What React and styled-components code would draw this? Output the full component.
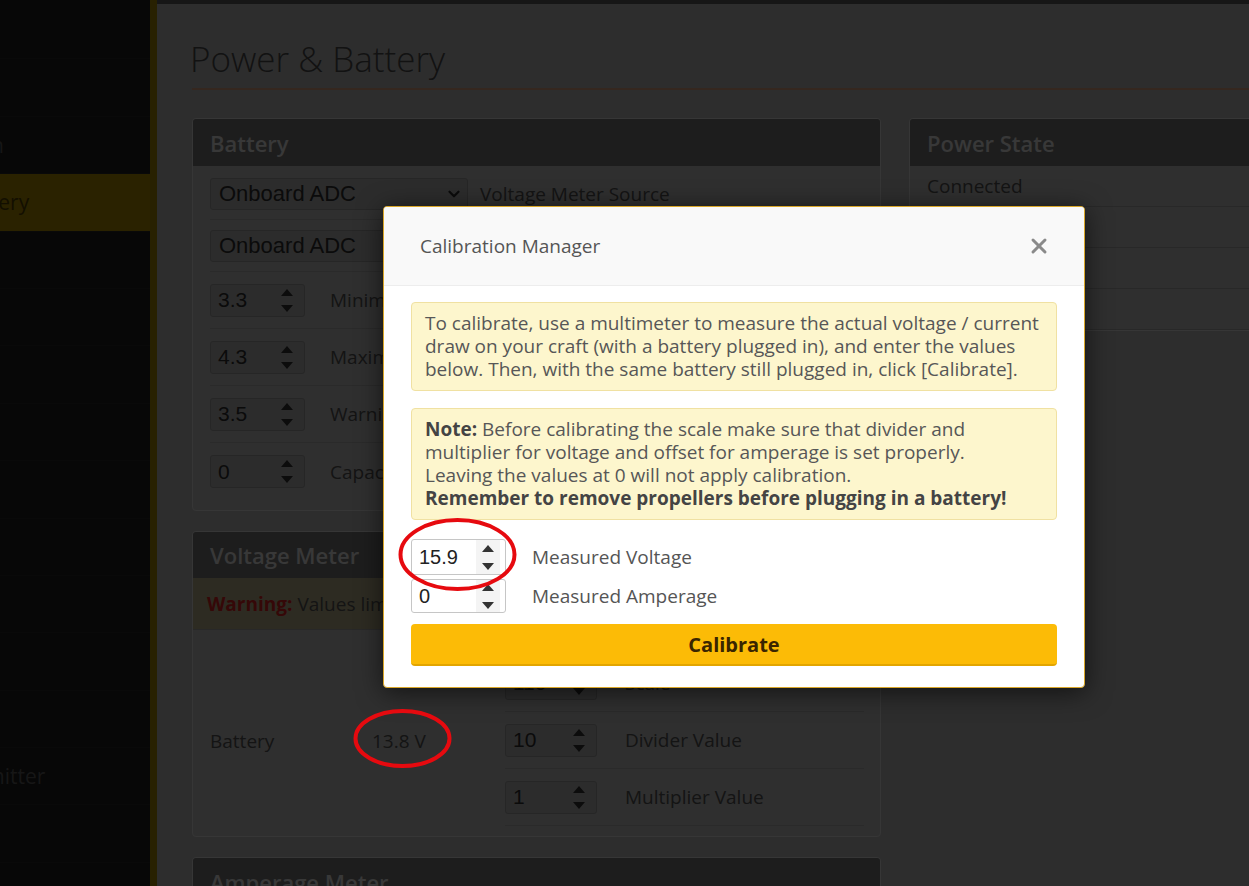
import React from 'react';
import styled, { createGlobalStyle } from 'styled-components';
import { ChevronDown, X } from 'lucide-react';

const GlobalStyle = createGlobalStyle`
  *, *::before, *::after { box-sizing: border-box; }
  html, body { margin: 0; padding: 0; }
  body {
    background: #b4b4b4;
    font-family: "Open Sans", "Noto Sans", sans-serif;
    overflow: hidden;
  }
`;

const Page = styled.div`
  position: relative;
  display: grid;
  grid-template-columns: 150px 7px 1fr;
  width: 1249px;
  height: 886px;
  overflow: hidden;
`;

const Sidebar = styled.nav`
  background: #1c1c1c;
  overflow: hidden;
  padding-top: 2px;
`;

const NavItem = styled.div`
  height: 57.4px;
  display: flex;
  align-items: center;
  white-space: nowrap;
  font-size: 21px;
  border-bottom: 1px solid #242424;
  background: ${p => (p.$active ? '#a88800' : 'transparent')};
  color: ${p => (p.$active ? '#4c3c00' : '#5a5a5a')};

  span {
    margin-left: -130px;
  }
`;

const Stripe = styled.div`
  background: #a08204;
`;

const Main = styled.main`
  border-top: 4px solid #585858;
  padding-left: 35px;
  overflow: hidden;
`;

const TitleBar = styled.div`
  height: 86px;
  display: flex;
  align-items: flex-end;
  padding-bottom: 12px;
  border-bottom: 2px solid #d49c7c;
`;

const Title = styled.h1`
  margin: 0 0 0 -2px;
  font-size: 35px;
  font-weight: 300;
  line-height: 1;
  color: #484848;
`;

const Columns = styled.div`
  display: grid;
  grid-template-columns: 689px 689px;
  gap: 28px;
  margin-top: 28px;
  align-items: start;
`;

const Stack = styled.div`
  display: flex;
  flex-direction: column;
  gap: 20px;
`;

const Panel = styled.section`
  background: #bababa;
  border: 1px solid #d6d6d6;
  border-radius: 4px;
  overflow: hidden;
`;

const PanelHead = styled.div`
  height: ${p => p.$h || 47}px;
  display: flex;
  align-items: center;
  padding: 0 17px;
  background: #747474;
  font-size: 22px;
  font-weight: 600;
  color: #dedede;
`;

const PanelBody = styled.div`
  padding: ${p => p.$pad};
`;

const FieldRow = styled.div`
  display: flex;
  align-items: center;
  gap: ${p => p.$gap}px;
  height: ${p => p.$h}px;
  margin: 0 17px;
  border-bottom: 1px solid #a6a6a6;
  font-size: 19px;
  color: #505050;
  white-space: nowrap;

  &:last-child {
    border-bottom: none;
  }
`;

const Select = styled.div`
  display: flex;
  align-items: center;
  justify-content: space-between;
  width: 258px;
  height: 32px;
  padding: 0 4px 0 8px;
  background: #b0b0b0;
  border: 1px solid #969696;
  border-radius: 3px;
  font-family: "Liberation Sans", Arial, sans-serif;
  font-size: 22px;
  color: #2c2c2c;
`;

const NumberBox = styled.div`
  display: flex;
  align-items: center;
  justify-content: space-between;
  flex: none;
  width: ${p => p.$w}px;
  height: ${p => p.$h}px;
  padding: 0 0 0 7px;
  background: ${p => (p.$light ? '#ffffff' : '#b0b0b0')};
  border: 1px solid ${p => (p.$light ? '#c6c6c6' : '#969696')};
  border-radius: 3px;
  font-family: "Liberation Sans", Arial, sans-serif;
  font-size: ${p => (p.$light ? 20 : 21)}px;
  color: ${p => (p.$light ? '#222222' : '#2c2c2c')};
`;

const Spin = styled.span`
  display: flex;
  flex-direction: column;
  align-items: center;
  justify-content: center;
  gap: ${p => (p.$light ? 11 : 9)}px;
  width: 24px;
  height: 100%;
  margin-right: 5px;
  color: ${p => (p.$light ? '#333333' : '#303030')};
  background: ${p => (p.$light ? '#f4f4f4' : 'transparent')};
`;

const Spinner = ({ light }) => (
  <Spin $light={light}>
    <svg width="12" height="7" viewBox="0 0 12 7"><path d="M0 7 6 0 12 7Z" fill="currentColor" /></svg>
    <svg width="12" height="7" viewBox="0 0 12 7"><path d="M0 0 6 7 12 0Z" fill="currentColor" /></svg>
  </Spin>
);

const NumberInput = ({ value, w = 95, h = 33, light }) => (
  <NumberBox $w={w} $h={h} $light={light}>
    {value}
    <Spinner light={light} />
  </NumberBox>
);

const Warning = styled.div`
  height: 52px;
  display: flex;
  align-items: center;
  padding: 0 14px;
  background: #b4ac88;
  border-bottom: 1px solid #a0a0a0;
  font-size: 19px;
  color: #505050;
  white-space: nowrap;

  b {
    color: #d42020;
    margin-right: 5px;
  }
`;

const MeterGrid = styled.div`
  display: grid;
  grid-template-columns: 295px 1fr;
  padding: 25px 16px 10px 17px;
`;

const Reading = styled.div`
  align-self: center;
  display: grid;
  grid-template-columns: 162px auto;
  font-size: 19px;
  color: #505050;
`;

const MeterRows = styled.div`
  display: flex;
  flex-direction: column;

  ${FieldRow} {
    margin: 0;
    border-bottom: 1px solid #a6a6a6;
  }
`;

const StateRow = styled.div`
  display: grid;
  grid-template-columns: 50% 50%;
  align-items: center;
  height: 41px;
  padding: 0 17px;
  border-bottom: 1px solid #a0a0a0;
  font-size: 19px;
  color: #505050;
`;

const Backdrop = styled.div`
  position: absolute;
  inset: 0;
  background: rgba(0, 0, 0, 0.75);
  z-index: 1;
`;

const Dialog = styled.div`
  position: absolute;
  left: 383px;
  top: 206px;
  width: 702px;
  background: #ffffff;
  border: 1px solid #d9a628;
  border-radius: 4px;
  box-shadow: 0 4px 26px rgba(0, 0, 0, 0.6);
  overflow: hidden;
  z-index: 2;
`;

const DialogHead = styled.div`
  height: 79px;
  display: flex;
  align-items: center;
  justify-content: space-between;
  padding: 0 33px 0 36px;
  background: #f9f9f9;
  border-bottom: 1px solid #ededed;
  font-size: 19px;
  color: #555555;
`;

const CloseButton = styled.span`
  display: flex;
  color: #8a8a8a;
`;

const DialogBody = styled.div`
  display: flex;
  flex-direction: column;
  padding: 16px 27px 21px;
`;

const Notice = styled.div`
  padding: 9px 13px;
  margin-bottom: ${p => p.$mb}px;
  background: #fdf6cd;
  border: 1px solid #f0e1a2;
  border-radius: 4px;
  font-size: 19px;
  line-height: 23px;
  color: #575757;
  white-space: nowrap;

  b {
    color: #444444;
  }
`;

const InputRow = styled.div`
  display: flex;
  align-items: center;
  gap: 26px;
  margin-bottom: 4px;
  font-size: 19px;
  color: #555555;
`;

const CalibrateButton = styled.button`
  margin-top: 7px;
  height: 42px;
  border: none;
  border-bottom: 2px solid #e2a500;
  border-radius: 4px;
  background: #fcbb06;
  font-family: "Open Sans", sans-serif;
  font-size: 20px;
  font-weight: 700;
  color: #3a2500;
`;

const Marks = styled.svg`
  position: absolute;
  left: 0;
  top: 0;
  z-index: 3;
  pointer-events: none;
`;

const navItems = [
  'Setup', 'Ports', 'Configuration', 'Power & Battery', 'Failsafe', 'PID Tuning',
  'Receiver', 'Modes', 'Adjustments', 'Servos', 'GPS', 'Motors', 'OSD',
  'Video Transmitter', 'Blackbox', 'CLI',
];

const batteryRows = [
  { value: '3.3', label: 'Minimum Cell Voltage' },
  { value: '4.3', label: 'Maximum Cell Voltage' },
  { value: '3.5', label: 'Warning Cell Voltage' },
  { value: '0', label: 'Capacity (mAh)' },
];

const meterRows = [
  { value: '110', label: 'Scale' },
  { value: '10', label: 'Divider Value' },
  { value: '1', label: 'Multiplier Value' },
];

const stateRows = [
  ['Connected', 'Yes'],
  ['Cell count', '4'],
  ['Voltage', '13.8 V'],
  ['mAh used', '0 mAh'],
];

export default function App() {
  return (
    <Page>
      <GlobalStyle />
      <Sidebar>
        {navItems.map(item => (
          <NavItem key={item} $active={item === 'Power & Battery'}>
            <span>{item}</span>
          </NavItem>
        ))}
      </Sidebar>
      <Stripe />
      <Main>
        <TitleBar>
          <Title>Power &amp; Battery</Title>
        </TitleBar>
        <Columns>
          <Stack>
            <Panel>
              <PanelHead>Battery</PanelHead>
              <PanelBody $pad="2px 0 10px">
                <FieldRow $h={52} $gap={12}>
                  <Select>Onboard ADC<ChevronDown size={18} strokeWidth={3} /></Select>
                  Voltage Meter Source
                </FieldRow>
                <FieldRow $h={52} $gap={12}>
                  <Select>Onboard ADC<ChevronDown size={18} strokeWidth={3} /></Select>
                  Amperage Meter Source
                </FieldRow>
                {batteryRows.map(r => (
                  <FieldRow key={r.label} $h={57} $gap={25}>
                    <NumberInput value={r.value} />
                    {r.label}
                  </FieldRow>
                ))}
              </PanelBody>
            </Panel>

            <Panel>
              <PanelHead $h={46}>Voltage Meter</PanelHead>
              <Warning>
                <b>Warning:</b> Values limited to the range supported by the firmware
              </Warning>
              <MeterGrid>
                <Reading>
                  <span>Battery</span>
                  <span>13.8 V</span>
                </Reading>
                <MeterRows>
                  {meterRows.map(r => (
                    <FieldRow key={r.label} $h={57} $gap={28}>
                      <NumberInput value={r.value} w={92} h={33} />
                      {r.label}
                    </FieldRow>
                  ))}
                </MeterRows>
              </MeterGrid>
            </Panel>

            <Panel>
              <PanelHead>Amperage Meter</PanelHead>
              <PanelBody $pad="0 0 120px" />
            </Panel>
          </Stack>

          <Panel>
            <PanelHead>Power State</PanelHead>
            {stateRows.map(([k, v]) => (
              <StateRow key={k}>
                <span>{k}</span>
                <span>{v}</span>
              </StateRow>
            ))}
          </Panel>
        </Columns>
      </Main>

      <Backdrop />

      <Dialog>
        <DialogHead>
          Calibration Manager
          <CloseButton><X size={24} strokeWidth={3} /></CloseButton>
        </DialogHead>
        <DialogBody>
          <Notice $mb={17}>
            To calibrate, use a multimeter to measure the actual voltage / current<br />
            draw on your craft (with a battery plugged in), and enter the values<br />
            below. Then, with the same battery still plugged in, click [Calibrate].
          </Notice>
          <Notice $mb={19}>
            <b>Note:</b> Before calibrating the scale make sure that divider and<br />
            multiplier for voltage and offset for amperage is set properly.<br />
            Leaving the values at 0 will not apply calibration.<br />
            <b>Remember to remove propellers before plugging in a battery!</b>
          </Notice>
          <InputRow>
            <NumberInput value="15.9" h={36} light />
            Measured Voltage
          </InputRow>
          <InputRow>
            <NumberInput value="0" h={34} light />
            Measured Amperage
          </InputRow>
          <CalibrateButton>Calibrate</CalibrateButton>
        </DialogBody>
      </Dialog>

      <Marks width="1249" height="886" viewBox="0 0 1249 886">
        <ellipse cx="457.5" cy="554.5" rx="57" ry="34.5" fill="none" stroke="#e60a0f" strokeWidth="4" />
        <ellipse cx="402.5" cy="738.5" rx="47" ry="27.5" fill="none" stroke="#e60a0f" strokeWidth="4" />
      </Marks>
    </Page>
  );
}
